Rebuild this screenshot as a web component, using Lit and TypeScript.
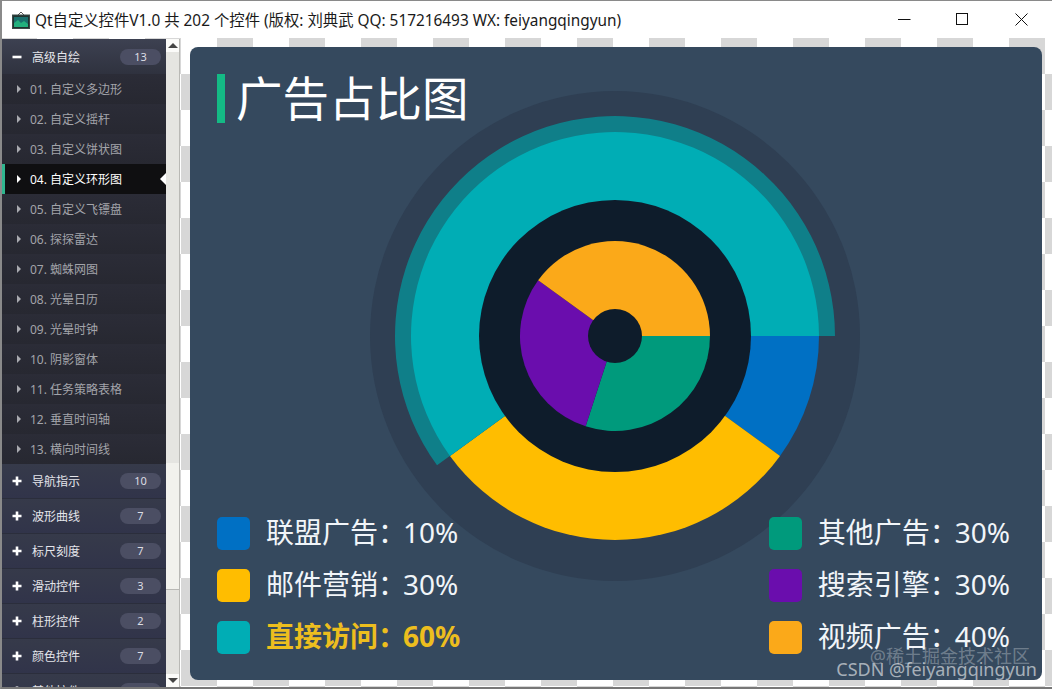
import { LitElement, html, css, svg } from "lit";
import { customElement } from "lit/decorators.js";

const CX = 250;
const CY = 250;

function sector(r: number, a0: number, a1: number) {
  const rad = (d: number) => (d * Math.PI) / 180;
  const x0 = CX + r * Math.cos(rad(a0));
  const y0 = CY + r * Math.sin(rad(a0));
  const x1 = CX + r * Math.cos(rad(a1));
  const y1 = CY + r * Math.sin(rad(a1));
  const large = a1 - a0 > 180 ? 1 : 0;
  return `M${CX} ${CY}L${x0.toFixed(2)} ${y0.toFixed(2)}A${r} ${r} 0 ${large} 1 ${x1.toFixed(2)} ${y1.toFixed(2)}Z`;
}

const ITEMS = [
  "01. 自定义多边形",
  "02. 自定义摇杆",
  "03. 自定义饼状图",
  "04. 自定义环形图",
  "05. 自定义飞镖盘",
  "06. 探探雷达",
  "07. 蜘蛛网图",
  "08. 光晕日历",
  "09. 光晕时钟",
  "10. 阴影窗体",
  "11. 任务策略表格",
  "12. 垂直时间轴",
  "13. 横向时间线",
];

const GROUPS: [string, number][] = [
  ["导航指示", 10],
  ["波形曲线", 7],
  ["标尺刻度", 7],
  ["滑动控件", 3],
  ["柱形控件", 2],
  ["颜色控件", 7],
  ["其他控件", 5],
];

const LEFT = [
  { c: "#0070c4", t: "联盟广告：", v: "10%", on: false },
  { c: "#ffbd00", t: "邮件营销：", v: "30%", on: false },
  { c: "#00adb5", t: "直接访问：", v: "60%", on: true },
];
const RIGHT = [
  { c: "#009a7c", t: "其他广告：", v: "30%", on: false },
  { c: "#6a0dad", t: "搜索引擎：", v: "30%", on: false },
  { c: "#fba919", t: "视频广告：", v: "40%", on: false },
];

@customElement("app-root")
export class AppRoot extends LitElement {
  static styles = css`
    :host {
      display: flex;
      flex-direction: column;
      width: 1052px;
      height: 689px;
      box-sizing: border-box;
      overflow: hidden;
      border-top: 1px solid #8a8a8a;
      border-left: 2px solid #8a8a8a;
      border-bottom: 2px solid #777;
      background: #fff;
      font-family: "Noto Sans", "Noto Sans CJK SC", sans-serif;
    }
    .titlebar {
      flex: none;
      height: 37px;
      display: flex;
      align-items: center;
      padding-left: 10px;
      gap: 5px;
      color: #1a1a1a;
      font-size: 15.37px;
      white-space: nowrap;
    }
    .ttext { flex: 1; margin-top: -1px; }
    .wbtns { display: flex; align-items: center; padding-right: 24px; gap: 45px; }
    .wbtns svg { display: block; }
    .wbtns svg:last-child { margin-left: 1px; }
    .body {
      flex: 1;
      min-height: 0;
      display: flex;
      background-color: #fff;
      background-image: conic-gradient(#fff 25%, #d7d7d7 0 50%, #fff 0 75%, #d7d7d7 0);
      background-size: 72px 72px;
      background-position: -1px 0;
    }
    .side {
      flex: none;
      width: 164px;
      margin-top: 1px;
      overflow: hidden;
      background: #2a2b35;
    }
    .group {
      height: 35px;
      box-sizing: border-box;
      display: flex;
      align-items: center;
      padding: 0 5px 0 10px;
      color: #e4e5ea;
      font-size: 12px;
      background: linear-gradient(#363a4a, #31344a);
      border-bottom: 1px solid #2b2e3c;
    }
    .group.open { background: linear-gradient(#3d4151, #2f323f); border-bottom: none; }
    .group svg { flex: none; margin-right: 10px; }
    .gname { flex: 1; }
    .badge {
      width: 41px;
      height: 16px;
      border-radius: 8px;
      background: #4b4e63;
      color: #dcdde3;
      font-size: 11px;
      line-height: 16px;
      text-align: center;
    }
    .item {
      height: 30px;
      display: flex;
      align-items: center;
      position: relative;
      padding-left: 15px;
      gap: 9px;
      color: #a3a4aa;
      font-size: 12px;
      background: linear-gradient(#2b2c37, #272831);
    }
    .item::before {
      content: "";
      width: 0;
      height: 0;
      border-left: 4px solid #a9aab0;
      border-top: 4px solid transparent;
      border-bottom: 4px solid transparent;
    }
    .item.sel {
      background: #0f0f11;
      color: #fff;
      box-shadow: inset 3px 0 0 #2fb68f;
    }
    .item.sel::before { border-left-color: #fff; }
    .item.sel::after {
      content: "";
      position: absolute;
      right: 0;
      top: 9px;
      border-right: 6px solid #fff;
      border-top: 6px solid transparent;
      border-bottom: 6px solid transparent;
    }
    .scroll {
      flex: none;
      width: 14px;
      margin: 1px 10px 0 0;
      box-sizing: border-box;
      border-right: 1px solid #b9b9b5;
      display: flex;
      flex-direction: column;
      background: #e2e2de;
    }
    .arrow { flex: none; height: 13px; background: #fbfbf9; display: flex; align-items: center; justify-content: center; }
    .arrow i { border-left: 5px solid transparent; border-right: 5px solid transparent; }
    .arrow.up i { border-bottom: 5px solid #444; }
    .arrow.down i { border-top: 5px solid #444; }
    .track1 { flex: none; height: 411px; background: #e5e5e1; }
    .thumb { flex: none; height: 127px; background: #f2f2ed; border-bottom: 1px solid #b9b9b5; box-sizing: border-box; }
    .track2 { flex: 1; background: #e2e2de; }
    .panel {
      flex: none;
      position: relative;
      width: 852px;
      height: 633px;
      margin-top: 9px;
      box-sizing: border-box;
      padding: 27px 32px 26px 27px;
      border-radius: 8px;
      background: #35495e;
      display: flex;
      flex-direction: column;
      justify-content: space-between;
      overflow: hidden;
    }
    .chart { position: absolute; left: 175px; top: 39px; }
    .head {
      position: relative;
      display: flex;
      align-items: center;
      gap: 11px;
      height: 49px;
      color: #fff;
      font-size: 46.5px;
      line-height: 49px;
    }
    .head::before { content: ""; width: 8px; height: 49px; background: #14ba85; }
    .legend { position: relative; display: flex; justify-content: space-between; }
    .col { display: flex; flex-direction: column; gap: 19px; }
    .row {
      display: flex;
      align-items: center;
      gap: 16px;
      height: 33px;
      color: #f1f5f9;
      font-size: 28px;
      line-height: 33px;
      white-space: nowrap;
    }
    .row.on { color: #edbe1e; font-weight: 700; }
    .sw { flex: none; width: 33px; height: 33px; border-radius: 5px; }
    .txt { padding-bottom: 3px; }
    .val { margin-left: -3px; }
    .mark {
      position: absolute;
      right: 12px;
      bottom: 1px;
      display: flex;
      flex-direction: column;
      align-items: flex-end;
      color: rgba(255, 255, 255, 0.58);
      font-size: 18px;
      line-height: 20px;
      white-space: nowrap;
    }
    .mark .a { color: rgba(255, 255, 255, 0.3); margin-bottom: -7px; }
    .mark .b { margin-right: -7px; }
  `;

  private plus() {
    return html`<svg width="10" height="10" viewBox="0 0 10 10"><path d="M5 .5v9M.5 5h9" stroke="#fff" stroke-width="2.6" fill="none"/></svg>`;
  }

  private chart() {
    const slices: [number, number, number, string][] = [
      [204, 0, 36, "#0070c4"],
      [204, 36, 144, "#ffbd00"],
      [220, 144, 360, "#0f7f89"],
      [204, 144, 360, "#00adb5"],
    ];
    const inner: [number, number, number, string][] = [
      [95, 0, 108, "#009a7c"],
      [95, 108, 216, "#6a0dad"],
      [95, 216, 360, "#fba919"],
    ];
    return html`<svg class="chart" width="500" height="500" viewBox="0 0 500 500">
      <circle cx=${CX} cy=${CY} r="245" fill="#2f3f53"></circle>
      ${slices.map((s) => svg`<path d=${sector(s[0], s[1], s[2])} fill=${s[3]}></path>`)}
      <circle cx=${CX} cy=${CY} r="136" fill="#0e1c2b"></circle>
      ${inner.map((s) => svg`<path d=${sector(s[0], s[1], s[2])} fill=${s[3]}></path>`)}
      <circle cx=${CX} cy=${CY} r="27" fill="#0e1c2b"></circle>
    </svg>`;
  }

  private legendCol(rows: { c: string; t: string; v: string; on: boolean }[]) {
    return html`<div class="col">
      ${rows.map(
        (r) => html`<div class="row ${r.on ? "on" : ""}">
          <span class="sw" style="background:${r.c}"></span>
          <span class="txt">${r.t}<span class="val">${r.v}</span></span>
        </div>`
      )}
    </div>`;
  }

  render() {
    return html`
      <div class="titlebar">
        <svg width="18" height="18" viewBox="0 0 18 18">
          <path d="M6 4 9 1l3 3" fill="none" stroke="#555" stroke-width="1"/>
          <rect x=".5" y="4" width="17" height="13.5" fill="#20322f" stroke="#3b4a48"/>
          <rect x="2" y="6" width="14" height="10" fill="#1a6f6c"/>
          <path d="M2 16v-4l4-3 3 3 3-2 4 3v3z" fill="#22b07d"/>
        </svg>
        <span class="ttext">Qt自定义控件V1.0 共 202 个控件 (版权: 刘典武 QQ: 517216493 WX: feiyangqingyun)</span>
        <div class="wbtns">
          <svg width="13" height="13" viewBox="0 0 13 13"><path d="M0 6.5h12.5" stroke="#111" stroke-width="1"/></svg>
          <svg width="13" height="13" viewBox="0 0 13 13"><rect x=".5" y=".5" width="11" height="11" fill="none" stroke="#111"/></svg>
          <svg width="13" height="13" viewBox="0 0 13 13"><path d="M.5.5l12 12M12.5.5l-12 12" stroke="#111" stroke-width="1"/></svg>
        </div>
      </div>
      <div class="body">
        <div class="side">
          <div class="group open">
            <svg width="10" height="10" viewBox="0 0 10 10"><path d="M.5 5h9" stroke="#fff" stroke-width="2.6"/></svg>
            <span class="gname">高级自绘</span><span class="badge">13</span>
          </div>
          ${ITEMS.map((t, i) => html`<div class="item ${i === 3 ? "sel" : ""}">${t}</div>`)}
          ${GROUPS.map(
            (g) => html`<div class="group">${this.plus()}<span class="gname">${g[0]}</span><span class="badge">${g[1]}</span></div>`
          )}
        </div>
        <div class="scroll">
          <div class="arrow up"><i></i></div>
          <div class="track1"></div>
          <div class="thumb"></div>
          <div class="track2"></div>
          <div class="arrow down"><i></i></div>
        </div>
        <div class="panel">
          ${this.chart()}
          <div class="head">广告占比图</div>
          <div class="legend">${this.legendCol(LEFT)}${this.legendCol(RIGHT)}</div>
          <div class="mark"><span class="a">@稀土掘金技术社区</span><span class="b">CSDN @feiyangqingyun</span></div>
        </div>
      </div>
    `;
  }
}
